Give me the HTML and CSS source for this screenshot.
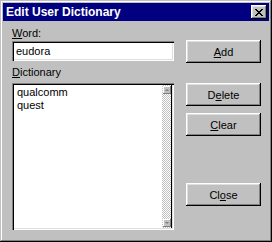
FILE: index.html
```html
<!DOCTYPE html>
<html lang="en">
<head>
    <meta charset="UTF-8">
    <title>Edit User Dictionary</title>
    <link rel="stylesheet" href="styles.css">
</head>
<body>
    <div class="window">
        <div class="titlebar">
            <span class="title">Edit User Dictionary</span>
            <button type="button" class="close-box">
                <svg width="8" height="7" viewBox="0 0 8 7">
                    <path d="M0 0h2v1h1v1h2v-1h1v-1h2v1h-1v1h-1v1h-1v1h1v1h1v1h1v1h-2v-1h-1v-1h-2v1h-1v1h-2v-1h1v-1h1v-1h1v-1h-1v-1h-1v-1h-1z" fill="#000"/>
                </svg>
            </button>
        </div>
        <div class="content">
            <div class="left">
                <div class="label"><u>W</u>ord:</div>
                <div class="field">eudora</div>
                <div class="label dict-label"><u>D</u>ictionary</div>
                <div class="listbox">
                    <div class="items">
                        <div>qualcomm</div>
                        <div>quest</div>
                    </div>
                    <div class="scrollbar">
                        <div class="arrow up">
                            <svg width="5" height="3" viewBox="0 0 5 3"><path d="M2 0h1v1h1v1h1v1h-5v-1h1v-1h1z" fill="#808080"/></svg>
                        </div>
                        <div class="track"></div>
                        <div class="arrow down">
                            <svg width="5" height="3" viewBox="0 0 5 3"><path d="M0 0h5v1h-1v1h-1v1h-1v-1h-1v-1h-1z" fill="#808080"/></svg>
                        </div>
                    </div>
                </div>
            </div>
            <div class="right">
                <button type="button" class="btn"><u>A</u>dd</button>
                <button type="button" class="btn delete">D<u>e</u>lete</button>
                <button type="button" class="btn clear"><u>C</u>lear</button>
                <button type="button" class="btn close">Cl<u>o</u>se</button>
            </div>
        </div>
    </div>
</body>
</html>
```

FILE: styles.css
```css
* {
    box-sizing: border-box;
}
body {
    margin: 0;
    background-color: #c0c0c0;
    font-family: 'Liberation Sans', Arial, sans-serif;
    font-size: 11px;
    color: #000;
}
.window {
    width: 272px;
    height: 242px;
    padding: 3px;
    background-color: #c0c0c0;
    box-shadow: inset -1px -1px #000, inset 1px 1px #c0c0c0, inset -2px -2px #808080, inset 2px 2px #fff;
}
.titlebar {
    display: flex;
    align-items: center;
    justify-content: space-between;
    height: 18px;
    padding: 0 2px 0 3px;
    background-color: #000080;
}
.title {
    color: #fff;
    font-weight: bold;
    font-size: 12px;
}
.close-box {
    display: flex;
    align-items: center;
    justify-content: center;
    width: 16px;
    height: 14px;
    padding: 0;
    border: none;
    background-color: #c0c0c0;
    box-shadow: inset -1px -1px #000, inset 1px 1px #fff, inset -2px -2px #808080, inset 2px 2px #dfdfdf;
}
.content {
    display: flex;
    gap: 12px;
    padding: 6px 0 0 9px;
}
.left {
    display: flex;
    flex-direction: column;
    width: 162px;
}
.label {
    height: 14px;
    line-height: 13px;
}
.field {
    height: 20px;
    padding: 3px 4px;
    line-height: 14px;
    background-color: #fff;
    box-shadow: inset 1px 1px #808080, inset 2px 2px #000, inset -1px -1px #fff, inset -2px -2px #dfdfdf;
}
.dict-label {
    margin: 5px 0 3px;
}
.listbox {
    display: flex;
    height: 147px;
    padding: 2px;
    background-color: #fff;
    box-shadow: inset 1px 1px #808080, inset 2px 2px #000, inset -1px -1px #fff, inset -2px -2px #dfdfdf;
}
.items {
    flex: 1;
    padding: 1px 3px;
    line-height: 13px;
}
.scrollbar {
    display: flex;
    flex-direction: column;
    width: 10px;
    border-right: 1px solid #000;
    background: repeating-conic-gradient(#c0c0c0 0 25%, #fff 0 50%) 0 0 / 2px 2px;
}
.arrow {
    display: flex;
    align-items: center;
    justify-content: center;
    width: 8px;
    height: 8px;
    margin-left: 1px;
    background-color: #c0c0c0;
    box-shadow: inset -1px -1px #808080, inset 1px 1px #fff;
}
.arrow svg {
    width: 4px;
    height: 2px;
}
.arrow.up {
    margin-top: 1px;
}
.arrow.down {
    margin-bottom: 1px;
}
.track {
    flex: 1;
}
.right {
    display: flex;
    flex-direction: column;
    width: 75px;
    padding-top: 13px;
}
.btn {
    height: 23px;
    padding: 0;
    border: none;
    background-color: #c0c0c0;
    font-family: inherit;
    font-size: 11px;
    color: #000;
    box-shadow: inset -1px -1px #000, inset 1px 1px #fff, inset -2px -2px #808080, inset 2px 2px #dfdfdf;
}
.btn.delete {
    margin-top: 20px;
}
.btn.clear {
    margin-top: 7px;
}
.btn.close {
    margin-top: 47px;
}
```
